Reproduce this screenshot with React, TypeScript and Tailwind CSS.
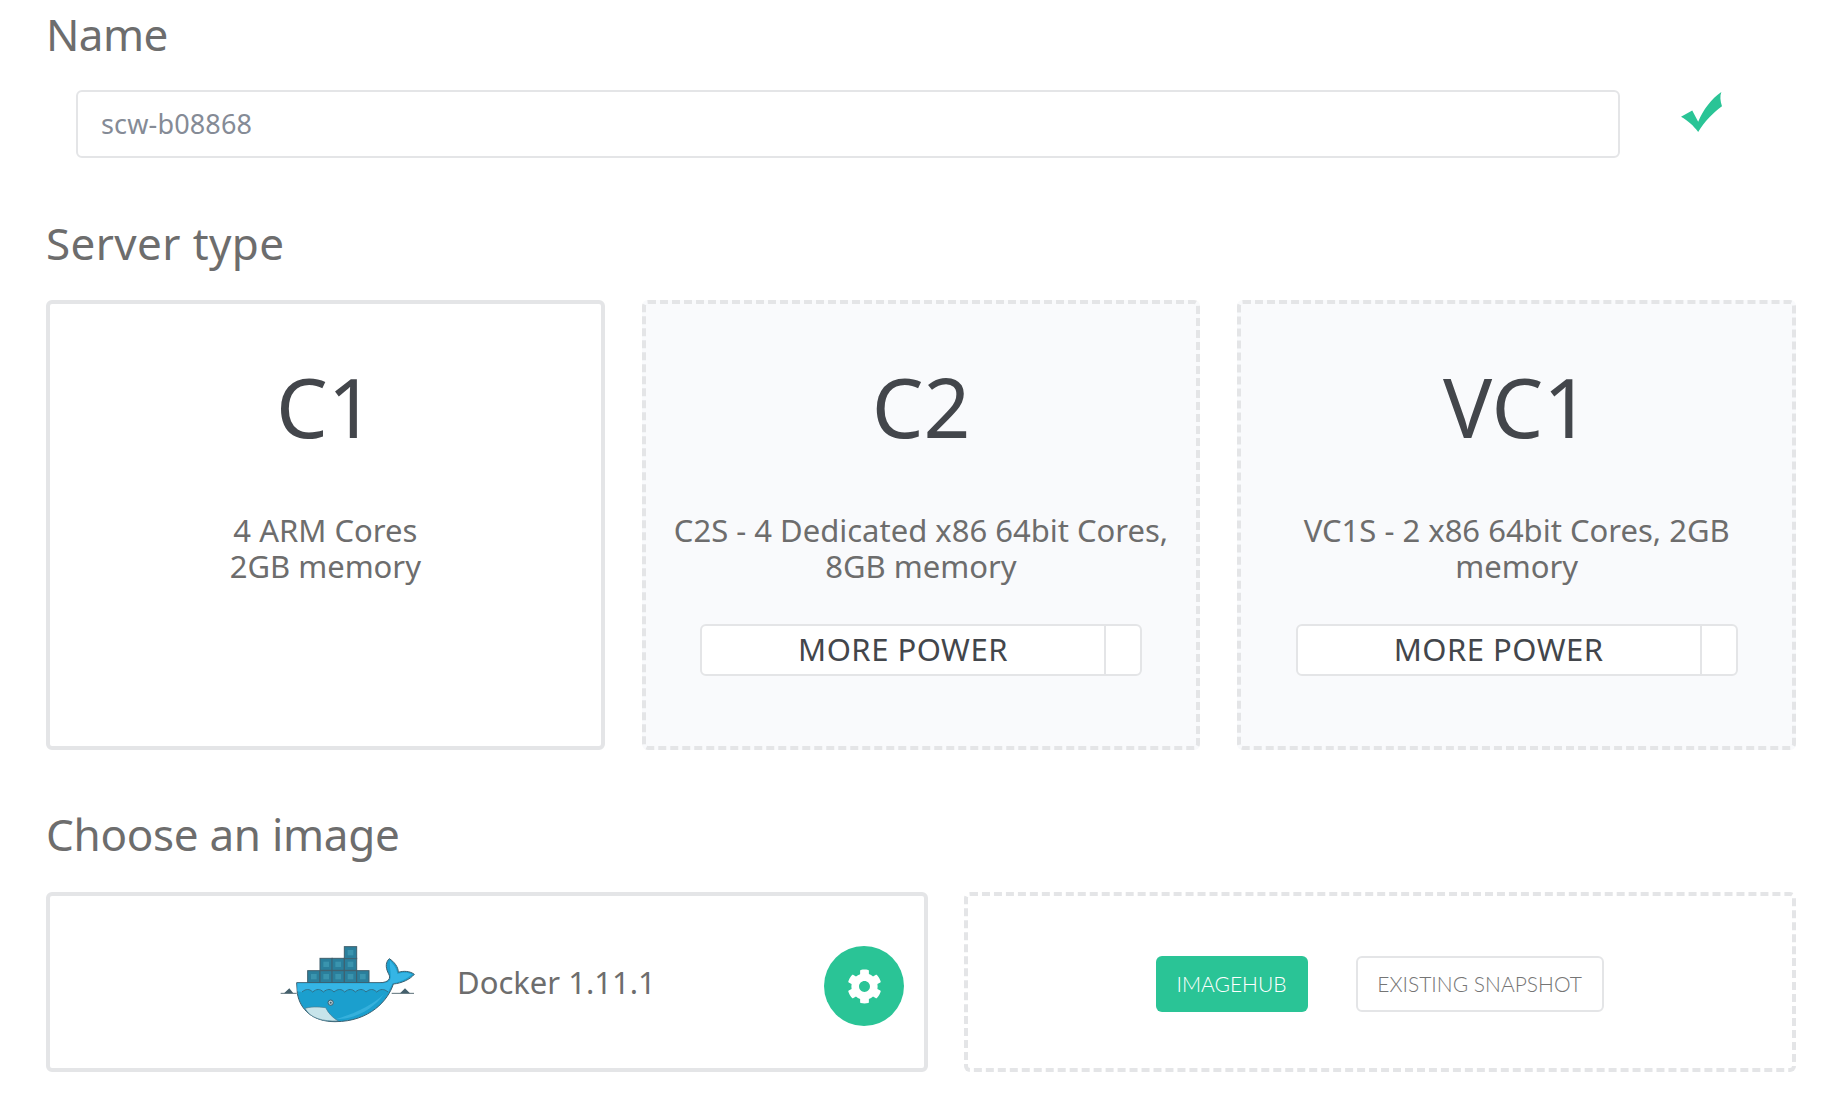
import { FaCog } from "react-icons/fa";

const SERVERS = [
  { name: "C1", lines: ["4 ARM Cores", "2GB memory"], selected: true },
  { name: "C2", lines: ["C2S - 4 Dedicated x86 64bit Cores,", "8GB memory"], selected: false },
  { name: "VC1", lines: ["VC1S - 2 x86 64bit Cores, 2GB", "memory"], selected: false },
];

const BOXES = [
  [143, 152], [180, 152], [216, 152], [253, 152], [290, 152],
  [180, 115], [216, 115], [253, 115],
  [253, 80],
];

function Heading({ children, className }: { children: React.ReactNode; className: string }) {
  return <h2 className={`text-[44px] leading-[56px] font-normal text-[#6d6d6d] ${className}`}>{children}</h2>;
}

// traced against the 3x crop of the logo
function DockerLogo() {
  return (
    <svg width="135" height="130" viewBox="60 0 405 390">
      {BOXES.map(([x, y]) => (
        <g key={`${x}-${y}`}>
          <rect x={x} y={y} width="37" height="36" fill="#2a7f9c" stroke="#3f5f6c" strokeWidth="3" />
          <rect x={x + 10} y={y + 10} width="17" height="16" fill="#3a94ae" />
        </g>
      ))}
      <path d="M62 220 H110 M395 220 H462" stroke="#5b6f78" strokeWidth="3" />
      <path d="M72 220 L88 205 L100 220 Z M420 220 L435 205 L450 220 Z" fill="#44606c" />
      <path d="M110 188 H360 C385 188 395 175 385 160 C375 140 378 125 388 116 C402 125 415 140 415 157 C430 152 450 153 463 163 C450 178 425 190 400 192 C385 240 330 305 225 305 C160 305 120 270 112 220 Z" fill="#1b9fce" stroke="#3a5f70" strokeWidth="3" />
      <path d="M112 190 H362 C385 190 394 182 392 165 C392 150 388 135 390 122 C400 132 410 145 412 162 C430 156 445 157 456 163 C442 176 420 186 398 190 L384 216 C372 208 362 208 350 216 C340 208 330 208 318 216 C308 208 298 208 286 216 C276 208 266 208 254 216 C244 208 234 208 222 216 C212 208 202 208 190 216 C180 208 170 208 158 216 C148 208 138 208 126 216 L112 214 Z" fill="#35b5e5" />
      <path d="M126 216 C138 206 148 206 158 216 C170 206 180 206 190 216 C202 206 212 206 222 216 C234 206 244 206 254 216 C266 206 276 206 286 216 C298 206 308 206 318 216 C330 206 340 206 350 216 C362 206 372 206 384 216" fill="none" stroke="#2d6f88" strokeWidth="3" />
      <path d="M225 298 C290 298 345 262 372 222 C345 250 290 280 225 298 Z" fill="#35b0dc" />
      <path d="M135 265 C160 258 185 262 197 263 C205 280 220 295 235 303 C190 305 150 295 135 265 Z" fill="#c7e4ea" stroke="#4f7c8c" strokeWidth="2" />
      <circle cx="212" cy="248" r="8" fill="#b9ccd3" stroke="#3a5f70" strokeWidth="3" />
      <circle cx="212" cy="248" r="3" fill="#3a5f70" />
    </svg>
  );
}

export default function App() {
  return (
    <div className="w-[1846px] h-[1104px] overflow-hidden bg-white pl-[46px] pr-[50px] pt-[6px]" style={{ fontFamily: '"Noto Sans", sans-serif' }}>
      <Heading className="tracking-[-0.6px]">Name</Heading>
      <div className="flex items-start mt-[28px] ml-[30px]">
        <div className="w-[1544px] h-[68px] rounded-[6px] border-2 border-[#e4e5e7] flex items-center pl-[23px] text-[27px] text-[#858b96] tracking-[0.15px]">scw-b08868</div>
        <svg className="ml-[61px] mt-[2px]" width="41" height="40" viewBox="363 97 124 121">
          <path d="M363 172 L397 153 L415 187 C430 150 455 118 485 97 C480 110 482 125 487 140 C460 160 435 185 415 218 C400 198 385 185 363 172 Z" fill="#2ac496" />
        </svg>
      </div>

      <div className="mt-[57px]">
        <Heading className="tracking-[0.4px]">Server type</Heading>
      </div>
      <div className="grid grid-cols-3 gap-[37px] mt-[29px]">
        {SERVERS.map((s) => (
          <div key={s.name} className={`h-[450px] rounded-[6px] border-4 flex flex-col items-center ${s.selected ? "border-solid border-[#e4e5e7] bg-white" : "border-dashed border-[#e4e5e7] bg-[#f9fafc]"}`}>
            <div className="mt-[57px] text-[82px] leading-[90px] text-[#43464b]">{s.name}</div>
            <p className="mt-[61px] text-[31px] leading-[36px] text-[#6d6d6d] text-center">
              {s.lines[0]}
              <br />
              {s.lines[1]}
            </p>
            {!s.selected && (
              <div className="mt-[40px] w-[442px] h-[52px] flex rounded-[6px] border-2 border-[#e4e5e7] bg-white">
                <div className="flex-1 flex items-center justify-center text-[31px] text-[#43464b] tracking-[0.5px] -mt-[2px]">MORE POWER</div>
                <div className="w-[36px] border-l-2 border-[#e4e5e7]" />
              </div>
            )}
          </div>
        ))}
      </div>

      <div className="mt-[56px]">
        <Heading className="-tracking-[0.3px]">Choose an image</Heading>
      </div>
      <div className="flex gap-[36px] mt-[30px]">
        <div className="w-[882px] h-[180px] rounded-[6px] border-4 border-[#e4e5e7] flex items-center">
          <div className="ml-[230px] mt-[6px]"><DockerLogo /></div>
          <div className="ml-[42px] text-[31px] text-[#6d6d6d]">Docker 1.11.1</div>
          <div className="ml-auto mr-[20px] mt-[8px] w-[80px] h-[80px] rounded-full bg-[#2ac496] flex items-center justify-center text-white">
            <FaCog size={35} />
          </div>
        </div>
        <div className="flex-1 h-[180px] rounded-[6px] border-4 border-dashed border-[#e4e5e7] flex items-center justify-center gap-[48px] pr-[1px] pt-[4px]">
          <div className="w-[152px] h-[56px] rounded-[6px] bg-[#2ac496] flex items-center justify-center text-[21px] text-white font-light" style={{ fontFamily: 'Lato, sans-serif' }}>IMAGEHUB</div>
          <div className="w-[248px] h-[56px] rounded-[6px] border-2 border-[#e4e5e7] flex items-center justify-center text-[21px] text-[#757575] font-light" style={{ fontFamily: 'Lato, sans-serif' }}>EXISTING SNAPSHOT</div>
        </div>
      </div>
    </div>
  );
}
